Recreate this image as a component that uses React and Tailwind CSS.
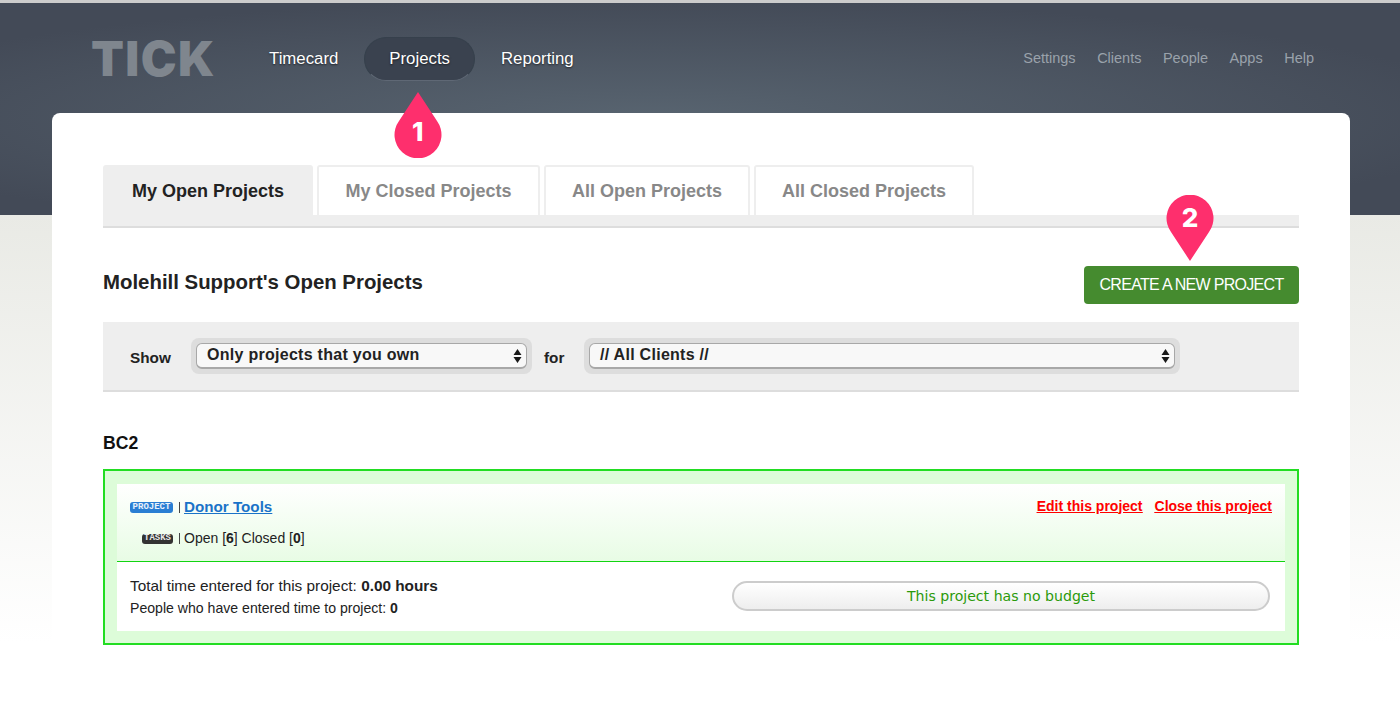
const mainNav = ["Timecard", "Projects", "Reporting"];
const sideNav = ["Settings", "Clients", "People", "Apps", "Help"];
const tabs = [
  { label: "My Open Projects", w: "w-[210px]", active: true },
  { label: "My Closed Projects", w: "w-[223px]" },
  { label: "All Open Projects", w: "w-[206px]" },
  { label: "All Closed Projects", w: "w-[220px]" },
];

function Pin({ n, d, digit, className }) {
  return (
    <div className={"absolute h-[66px] w-[48px] " + className}>
      <svg width="48" height="66" viewBox="0 0 48 66" className="absolute inset-0">
        <path d={d} fill="#fe2f6d" />
      </svg>
      <span className={"absolute inset-x-0 text-center font-['Inter',sans-serif] text-[26px] font-extrabold leading-[32px] text-white " + digit}>{n}</span>
    </div>
  );
}

function Select({ label, w }) {
  return (
    <div className={"rounded-lg bg-[#dddddd] p-[5px] " + w}>
      <div className="flex h-[26px] items-center justify-between rounded-[6px] border border-b-2 border-[#a8a8a8] bg-[#f8f8f8] pl-[10px] pr-[4px]">
        <span className="-mt-[2px] text-[16px] font-bold leading-none tracking-[0.28px] text-[#222222]">{label}</span>
        <svg width="9" height="16" viewBox="0 0 9 16">
          <path d="M4.5 1 L8.5 7 H0.5 Z M4.5 15 L0.5 9 H8.5 Z" fill="#1a1a1a" />
        </svg>
      </div>
    </div>
  );
}

function Badge({ children, className }) {
  return (
    <span className={"flex items-center justify-center rounded-[3px] font-['Liberation_Mono',monospace] text-[9px] font-bold leading-none text-white/90 " + className}>
      {children}
    </span>
  );
}

export default function App() {
  return (
    <div className="h-[712px] overflow-hidden border-t-[3px] border-[#cccccc] bg-[radial-gradient(ellipse_850px_120px_at_650px_115px,#586470,rgba(88,100,112,0)),linear-gradient(to_bottom,#434a57_0,#434a57_212px,#e9eae5_212px,#ffffff_640px)] bg-[length:100%_212px,100%_100%] bg-no-repeat font-['Liberation_Sans',Arial,sans-serif]">
      <header className="flex h-[110px] items-center pl-[91px] pr-[86px]">
        <div className="w-[178px] pt-[2px] font-['Inter',sans-serif] text-[48px] font-black leading-none tracking-[1.4px] text-[#7f868e]">TICK</div>
        <nav className="flex items-center gap-[25.5px] pt-[1px]">
          {mainNav.map((item) => (
            <div key={item} className="relative">
              <a
                className={
                  "block text-[16.8px] leading-[18px] text-white [text-shadow:0_1px_2px_rgba(0,0,0,0.6)] " +
                  (item === "Projects"
                    ? "rounded-[22px] border border-[#36404c] border-b-[#5f6875] bg-[#3a424f] px-[24.5px] py-[12px]"
                    : "")
                }
              >
                {item}
              </a>
              {item === "Projects" && (
                <Pin
                  n={1}
                  d="M24 0 L43 29 A23.5 23.5 0 1 1 5 29 Z"
                  digit="top-[24px]"
                  className="left-[30px] top-[55px]"
                />
              )}
            </div>
          ))}
        </nav>
        <nav className="ml-auto flex items-center gap-[21.5px] pt-[2px] text-[14.5px] text-[#9aa2ab]">
          {sideNav.map((item) => (
            <a key={item}>{item}</a>
          ))}
        </nav>
      </header>

      <main className="ml-[52px] mr-[50px] h-[600px] rounded-t-lg bg-white px-[51px] pt-[52px]">
        <div className="flex gap-[4px]">
          {tabs.map((t) => (
            <div
              key={t.label}
              className={
                "flex h-[50px] items-center justify-center rounded-t-[3px] text-[18px] font-bold " +
                t.w +
                (t.active
                  ? " bg-[#eeeeee] pt-[2px] text-[#222222]"
                  : " border-2 border-b-0 border-[#eeeeee] text-[#888888]")
              }
            >
              {t.label}
            </div>
          ))}
        </div>
        <div className="h-[13px] border-b-2 border-[#dddddd] bg-[#eeeeee]" />

        <div className="mt-[38px] flex items-center justify-between">
          <h1 className="-mt-[6px] text-[20.4px] font-bold text-[#222222]">Molehill Support's Open Projects</h1>
          <div className="relative">
            <a className="flex h-[38px] w-[215px] items-center justify-center rounded-[4px] bg-[#458b2f] pb-[1px] text-[16px] tracking-[-0.7px] text-white">
              CREATE A NEW PROJECT
            </a>
            <Pin
              n={2}
              d="M24 66 L5 37 A23.5 23.5 0 1 1 43 37 Z"
              digit="top-[7px]"
              className="left-[82px] top-[-71px]"
            />
          </div>
        </div>

        <div className="mt-[18px] flex h-[70px] items-center border-b-2 border-[#dddddd] bg-[#eeeeee] pl-[27px]">
          <span className="w-[61px] pt-[4px] text-[15.3px] font-bold text-[#222222]">Show</span>
          <Select label="Only projects that you own" w="w-[341px]" />
          <span className="ml-[12px] w-[40px] pt-[4px] text-[15.3px] font-bold text-[#222222]">for</span>
          <Select label="// All Clients //" w="w-[596px]" />
        </div>

        <h2 className="mt-[41px] text-[17.6px] font-bold leading-[21px] text-[#111111]">BC2</h2>

        <section className="mt-[15px] border-2 border-[#22dd22] bg-[#ddfcd9] pb-[12px] pl-[12px] pr-[12px] pt-[13px]">
          <div className="h-[78px] border-b border-[#11d411] bg-gradient-to-b from-white to-[#e8fce5] px-[13px] pt-[12px]">
            <div className="flex items-center">
              <Badge className="h-[11px] w-[43px] bg-[#2a7ed3]">PROJECT</Badge>
              <span className="ml-[6px] mr-[4px] h-[11px] w-px bg-[#444444]" />
              <a className="text-[15.2px] font-bold leading-[22px] text-[#1a73c8] underline">Donor Tools</a>
              <div className="-mt-[2px] ml-auto flex gap-[12px] text-[14px] font-bold text-[#ff0000] underline">
                <a>Edit this project</a>
                <a>Close this project</a>
              </div>
            </div>
            <div className="mt-[10px] flex items-center text-[14px] text-[#222222]">
              <Badge className="ml-[12px] h-[10px] w-[31px] bg-[#333333]">TASKS</Badge>
              <span className="ml-[6px] mr-[4px] h-[11px] w-px bg-[#444444]" />
              <span>
                Open [<b>6</b>] Closed [<b>0</b>]
              </span>
            </div>
          </div>
          <div className="flex h-[69px] items-center bg-white pl-[13px] pr-[15px]">
            <div className="flex-1 text-[#222222]">
              <p className="text-[15.35px] leading-[20px]">
                Total time entered for this project: <b>0.00 hours</b>
              </p>
              <p className="mt-[3px] text-[14.1px] leading-[18px]">
                People who have entered time to project: <b>0</b>
              </p>
            </div>
            <div className="mb-[2px] flex h-[30px] w-[538px] items-center justify-center rounded-full border-2 border-[#cccccc] bg-gradient-to-b from-white to-[#eeeeee] pt-[3px] font-['DejaVu_Sans',sans-serif] text-[14.1px] text-[#2a9a0a]">
              This project has no budget
            </div>
          </div>
        </section>
      </main>
    </div>
  );
}
